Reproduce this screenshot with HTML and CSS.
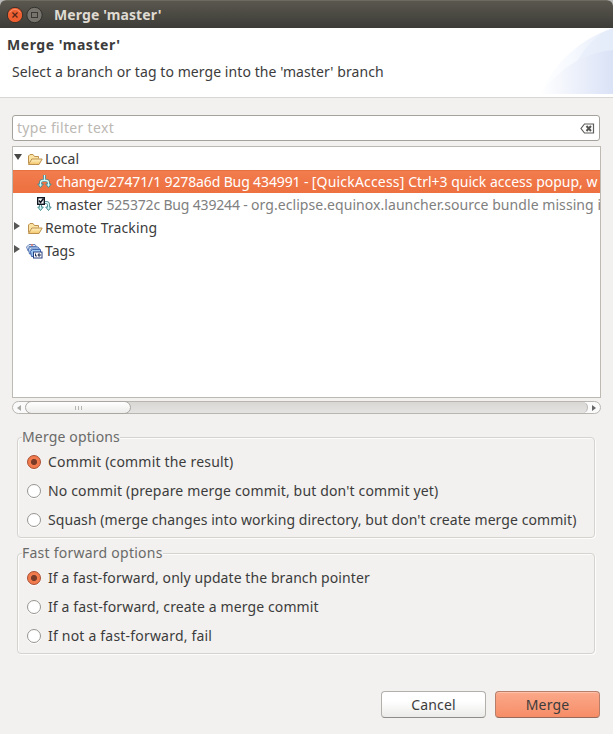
FILE: index.html
```html
<!DOCTYPE html>
<html lang="en">
<head>
<meta charset="utf-8">
<title>Merge 'master'</title>
<link rel="stylesheet" href="styles.css">
</head>
<body>
<svg class="defs" width="0" height="0" aria-hidden="true">
  <defs>
    <linearGradient id="gold" x1="0" y1="0" x2="0" y2="1"><stop offset="0" stop-color="#fff3c4"/><stop offset="1" stop-color="#f3c569"/></linearGradient>
    <symbol id="folder" viewBox="0 0 16 14">
      <path d="M1.500 11.500V4L3 2.500H6L7.500 4.500H11.500V6.500" fill="#fbe3a4" stroke="#bd914d"/>
      <path d="M1.500 12.500L4.800 7H15.200L12 12.500z" fill="url(#gold)" stroke="#bd914d" stroke-linejoin="round"/>
    </symbol>
    <symbol id="branch" viewBox="0 0 15 14">
      <path d="M7.500 0V5M3.500 10V8Q3.500 5.500 6 5.500H9Q11.500 5.500 11.500 8V10" fill="none" stroke="#4b8588" stroke-width="3"/>
      <path d="M.8 9H6.300L3.500 12.500zM8.700 9H14.200L11.500 12.500z" fill="#c9f7f7" stroke="#438b90"/>
      <path d="M7.500 0V5M3.500 10V8Q3.500 5.500 6 5.500H9Q11.500 5.500 11.500 8V10" fill="none" stroke="#d4f7f7" stroke-width="1.300"/>
    </symbol>
  </defs>
</svg>
<div class="window">
  <header class="titlebar">
    <svg class="controls" width="37" height="18" viewBox="0 0 37 18">
      <circle cx="9" cy="9" r="7.700" fill="#ef5f30" stroke="#33312c"/>
      <path d="M3.500 6.500Q9 0 14.500 6.500" fill="none" stroke="#f69370"/>
      <path d="M6.500 6.500L11.500 11.500M11.500 6.500L6.500 11.500" stroke="#55281b" stroke-width="1.300"/>
      <circle cx="28.500" cy="9" r="7.700" fill="#76746d" stroke="#33312c"/>
      <rect x="25.500" y="6.500" width="6" height="5" fill="none" stroke="#393834"/>
    </svg>
    <span class="window-title">Merge 'master'</span>
  </header>
  <section class="banner">
    <div class="banner-copy">
      <h1>Merge 'master'</h1>
      <p>Select a branch or tag to merge into the 'master' branch</p>
    </div>
    <svg class="banner-art" width="73" height="66" viewBox="0 0 73 66">
      <defs>
        <linearGradient id="wash"><stop offset="0" stop-color="#fff"/><stop offset=".45" stop-color="#f6f9fe"/><stop offset="1" stop-color="#e4ebf9"/></linearGradient>
        <linearGradient id="wash2"><stop offset="0" stop-color="#fff"/><stop offset="1" stop-color="#dae2f6"/></linearGradient>
      </defs>
      <path d="M0 66Q23 17 73 0V66z" fill="url(#wash)"/>
      <path d="M36 35Q50 10 73 0V22Q51 24 36 35z" fill="#e3ebfa" opacity=".5"/>
      <path d="M0 66Q30 26 73 22V66z" fill="url(#wash2)"/>
    </svg>
  </section>
  <main>
    <div class="filter">
      <span class="placeholder">type filter text</span>
      <svg width="15" height="11" viewBox="0 0 15 11">
        <path d="M4.500 1H13.500V10H4.500L1 5.500z" fill="#fff" stroke="#5e5e5c" stroke-width="1.200"/>
        <path d="M6.500 3L11 8M11 3L6.500 8" stroke="#555553" stroke-width="2"/>
      </svg>
    </div>
    <div class="tree">
      <div class="row"><i class="open"></i><svg class="folder"><use href="#folder"/></svg><span class="t-local">Local</span></div>
      <div class="row child selected"><svg class="branch"><use href="#branch"/></svg><span class="t-change">change/27471/1 9278a6d Bug 434991 - </span><span class="t-quick">[QuickAccess] </span><span>Ctrl+3 quick access popup, w</span></div>
      <div class="row child">
        <svg class="branch checked" viewBox="0 0 15 15">
          <path d="M7 5.500H9Q11.500 5.500 11.500 8V11M3.500 8V11" fill="none" stroke="#4b8588" stroke-width="3"/>
          <path d="M.8 10H6.300L3.500 13.500zM8.700 10H14.200L11.500 13.500z" fill="#c9f7f7" stroke="#438b90"/>
          <path d="M7 5.500H9Q11.500 5.500 11.500 8V11M3.500 8V11" fill="none" stroke="#d4f7f7" stroke-width="1.300"/>
          <rect x=".7" y=".7" width="6.600" height="6.600" fill="#fff" stroke="#111722" stroke-width="1.400"/>
          <path d="M2 3.500L3.500 5.500L6.500 1.500" fill="none" stroke="#111722" stroke-width="1.500"/>
        </svg>
        <span class="t-master">master</span><span class="t-commit">525372c Bug 439244 - </span><span class="t-bundle">org.eclipse.equinox.launcher.source bundle missing i</span>
      </div>
      <div class="row"><i class="closed"></i><svg class="folder"><use href="#folder"/></svg><span class="t-remote">Remote Tracking</span></div>
      <div class="row"><i class="closed"></i>
        <svg class="tags" viewBox="0 0 17 16">
          <path d="M.5 4L3 1.500H9L10.500 3.500H3V8H2z" fill="#dbe9fb" stroke="#6a82b3"/>
          <path d="M2.500 6L4.500 4H12L13.500 6H5V11H3.500z" fill="#d3e7fb" stroke="#4c70b4"/>
          <path d="M4.500 8.500L6.500 6.500H14.500V13.500H5.500z" fill="#9bc8f2" stroke="#416ab3"/>
          <circle cx="6" cy="2" r="1" fill="#e67869"/>
          <rect x="7.500" y="9" width="8.500" height="6" fill="#fff" stroke="#26417f"/>
          <path d="M9.500 10.500V13H11M12.300 11H14V13H12.300z" fill="none" stroke="#213052"/>
        </svg><span class="t-tags">Tags</span></div>
    </div>
    <div class="scrollbar">
      <span class="arrow left"></span><div class="thumb"><i></i><i></i><i></i></div><div class="trough"></div><span class="arrow right"></span>
    </div>
    <fieldset>
      <legend class="l-merge">Merge options</legend>
      <label><i class="radio on"></i><span class="o1">Commit (commit the result)</span></label>
      <label><i class="radio"></i><span class="o2">No commit (prepare merge commit, but don't commit yet)</span></label>
      <label><i class="radio"></i><span class="o3">Squash (merge changes into working directory, but don't create merge commit)</span></label>
    </fieldset>
    <fieldset>
      <legend class="l-fast">Fast forward options</legend>
      <label><i class="radio on"></i><span class="o4">If a fast-forward, only update the branch pointer</span></label>
      <label><i class="radio"></i><span class="o5">If a fast-forward, create a merge commit</span></label>
      <label><i class="radio"></i><span class="o6">If not a fast-forward, fail</span></label>
    </fieldset>
    <div class="actions"><button>Cancel</button><button class="primary">Merge</button></div>
  </main>
</div>
</body>
</html>
```
FILE: styles.css
```css
* { box-sizing: border-box; }
body { margin: 0; background: #b9b9b9; font: 14px/20px "Noto Sans", "Open Sans", sans-serif; color: #3c3c3c; }
.defs { display: block; }
.window { width: 613px; height: 734px; background: #f2f1ef; border-radius: 6px 6px 0 0; overflow: hidden; white-space: nowrap; }
.titlebar { height: 28px; display: flex; align-items: center; padding-left: 6px; background: linear-gradient(#59574e, #3d3c37); border-top: 1px solid #6c6a61; }
.window-title { margin-left: 11px; font-weight: 700; color: #dfdbd2; letter-spacing: .12px; }
.banner { height: 70px; display: flex; justify-content: space-between; background: #fff; border-bottom: 1px solid #d8d7d5; }
.banner-copy { padding: 7px 0 0 7px; }
h1 { margin: 0; font-size: 14px; line-height: 20px; letter-spacing: .55px; }
.banner p { margin: 7px 0 0 5px; letter-spacing: .07px; }
main { padding: 17px 12px 0; }
.filter { width: 588px; height: 26px; margin: 0 0 5px; padding: 0 4px 0 4px; display: flex; align-items: center; justify-content: space-between; border: 1px solid #a5a29c; border-radius: 3px; background: #fff; }
.placeholder { color: #bcb8b3; letter-spacing: .32px; }
.tree { width: 589px; height: 252px; background: #fff; border: 1px solid #bdb9b3; overflow: hidden; }
.row { height: 23px; display: flex; align-items: center; }
.row > span { white-space: pre; }
.row > i { width: 14px; height: 22px; flex: none; }
.open::before { content: ""; display: block; width: 0; margin: 6px 0 0 1px; border: 4px solid transparent; border-top: 6px solid #484846; border-bottom: 0; }
.closed::before { content: ""; display: block; width: 0; margin: 5px 0 0 1px; border: 4px solid transparent; border-left: 6px solid #575755; border-right: 0; }
.folder { width: 16px; height: 14px; margin-right: 2px; }
.tags { width: 17px; height: 16px; margin: 0 2px 0 -1px; }
.child { padding-left: 24px; }
.branch { flex: none; width: 15px; height: 14px; margin-right: 4px; }
.checked { height: 15px; }
.selected { background: linear-gradient(#f27c4d, #ed7040); color: #fff; border-top: 1px solid #e7713f; }
.t-change { letter-spacing: -.13px; }
.t-quick { letter-spacing: .18px; }
.t-commit { margin-left: 4px; color: #808080; letter-spacing: -.17px; }
.t-bundle { color: #808080; letter-spacing: .06px; }
.t-remote { letter-spacing: .13px; }
.scrollbar { width: 589px; height: 13px; margin-top: 3px; display: flex; border: 1px solid #b9b6b1; border-radius: 7px; background: #fafafa; }
.arrow { width: 12px; display: flex; align-items: center; justify-content: center; }
.arrow::before { content: ""; border: 3px solid transparent; }
.left::before { border-right: 4px solid #aaa8a5; border-left: 0; }
.right::before { border-left: 4px solid #666; border-right: 0; }
.thumb { width: 106px; height: 13px; margin-top: -1px; display: flex; align-items: center; justify-content: center; gap: 2px; border: 1px solid #aaa7a2; border-radius: 7px; background: linear-gradient(#fff, #ececea); z-index: 1; }
.thumb i { width: 1px; height: 4px; background: #b7b5b2; }
.trough { flex: 1; margin-left: -8px; background: linear-gradient(#d8d7d4, #e4e3e1); border-right: 1px solid #b9b6b1; border-radius: 0 6px 6px 0; }
fieldset { position: relative; width: 578px; height: 101px; margin: 23px 0 0 5px; padding: 9px 0 0 10px; border: 1px solid #d5d3d0; border-radius: 4px; box-shadow: inset 1px 1px #fcfcfb, 1px 1px #fcfcfb; }
fieldset + fieldset { margin-top: 15px; }
legend { position: absolute; left: 4px; top: -11px; padding: 0; background: #f2f1ef; color: #6a6a69; }
.l-merge { letter-spacing: .15px; }
.l-fast { letter-spacing: .24px; }
label { height: 29px; display: flex; align-items: center; gap: 7px; }
.o1 { letter-spacing: .19px; }
.o2 { letter-spacing: .16px; }
.o3 { letter-spacing: .075px; }
.o4 { letter-spacing: .08px; }
.o5 { letter-spacing: .12px; }
.o6 { letter-spacing: .2px; }
.radio { width: 14px; height: 14px; margin-left: -1px; border-radius: 50%; border: 1px solid #969490; background: #fff; box-shadow: 0 1px #fcfcfb; }
.radio.on { border-color: #a84d2f; background: radial-gradient(circle, #793c29 0 2.700px, #f27b4e 3.400px); }
.actions { display: flex; justify-content: flex-end; gap: 9px; margin-top: 37px; padding-right: 1px; }
button { width: 105px; height: 27px; padding: 0; border: 1px solid #b3b0ac; border-bottom-color: #8e8b88; border-radius: 4px; background: linear-gradient(#fff 35%, #ebebe9); font: inherit; color: #3c3c3c; letter-spacing: .15px; }
.primary { background: linear-gradient(#fba98b, #f68d67); border-color: #b77e69; border-bottom-color: #956a5b; box-shadow: inset 0 1px #ffc1aa; }
```
